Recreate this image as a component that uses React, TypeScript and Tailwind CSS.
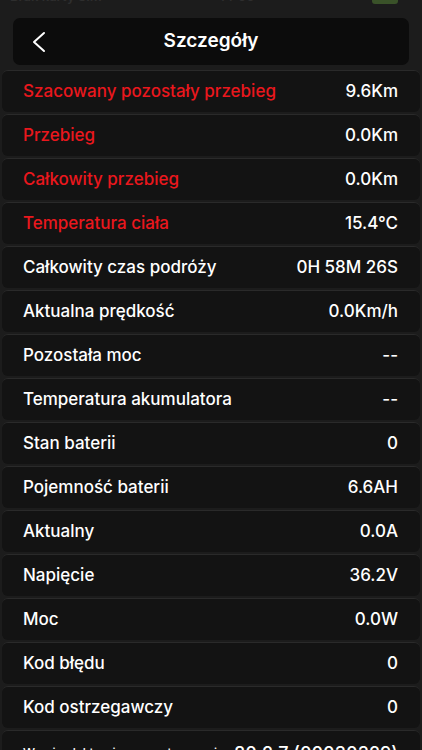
import React from 'react'

type Row = { label: string; value: string; alert?: boolean }

const ROWS: Row[] = [
  { label: 'Szacowany pozostały przebieg', value: '9.6Km', alert: true },
  { label: 'Przebieg', value: '0.0Km', alert: true },
  { label: 'Całkowity przebieg', value: '0.0Km', alert: true },
  { label: 'Temperatura ciała', value: '15.4°C', alert: true },
  { label: 'Całkowity czas podróży', value: '0H 58M 26S' },
  { label: 'Aktualna prędkość', value: '0.0Km/h' },
  { label: 'Pozostała moc', value: '--' },
  { label: 'Temperatura akumulatora', value: '--' },
  { label: 'Stan baterii', value: '0' },
  { label: 'Pojemność baterii', value: '6.6AH' },
  { label: 'Aktualny', value: '0.0A' },
  { label: 'Napięcie', value: '36.2V' },
  { label: 'Moc', value: '0.0W' },
  { label: 'Kod błędu', value: '0' },
  { label: 'Kod ostrzegawczy', value: '0' },
]

const App: React.FC = () => {
  return (
    <div
      className="w-[422px] h-[750px] overflow-hidden bg-[#1c1c1c] text-white"
      style={{ fontFamily: 'Inter, "Noto Sans", sans-serif' }}
    >
      {/* status bar, mostly scrolled off */}
      <div className="h-[18px] overflow-hidden px-[10px]">
        <div className="-mt-[13px] flex items-center justify-between text-[13px] font-semibold text-[#2e2e2e]">
          <span>Brak karty SIM</span>
          <span>14:06</span>
          <span className="w-[26px] h-[14px] rounded-[3px] bg-[#3a5229] mr-[14px]" />
        </div>
      </div>

      {/* header */}
      <div className="mx-[13px] h-[47px] rounded-[7px] bg-[#0c0c0c] flex items-center px-[18px]">
        <svg width="16" height="22" viewBox="0 0 16 22" fill="none" className="shrink-0">
          <path d="M13 2 L3 11 L13 20" stroke="#ffffff" strokeWidth="2" strokeLinecap="round" strokeLinejoin="round" />
        </svg>
        <div className="flex-1 text-center text-[19px] font-semibold pr-[16px]">Szczegóły</div>
      </div>

      {/* rows */}
      <div className="mt-[5px] flex flex-col gap-[2px] px-[2px]">
        {ROWS.map((r) => (
          <div
            key={r.label}
            className="h-[42px] shrink-0 rounded-[6px] bg-[#131313] border-t border-[#2a2a2a] flex items-center justify-between pl-[21px] pr-[22px] text-[17px] font-medium"
          >
            <span className={r.alert ? 'text-[#ea171d]' : 'text-white'}>{r.label}</span>
            <span>{r.value}</span>
          </div>
        ))}
        <div className="h-[42px] shrink-0 rounded-[6px] bg-[#131313] border-t border-[#2a2a2a] flex items-start justify-between pl-[21px] pr-[22px] pt-[9px]">
          <span className="text-[12px] font-medium mt-[4px]">Wersja elektronicznego sterowania</span>
          <span className="text-[18px] font-medium">80.2.7 (00030329)</span>
        </div>
      </div>
    </div>
  )
}

export default App
